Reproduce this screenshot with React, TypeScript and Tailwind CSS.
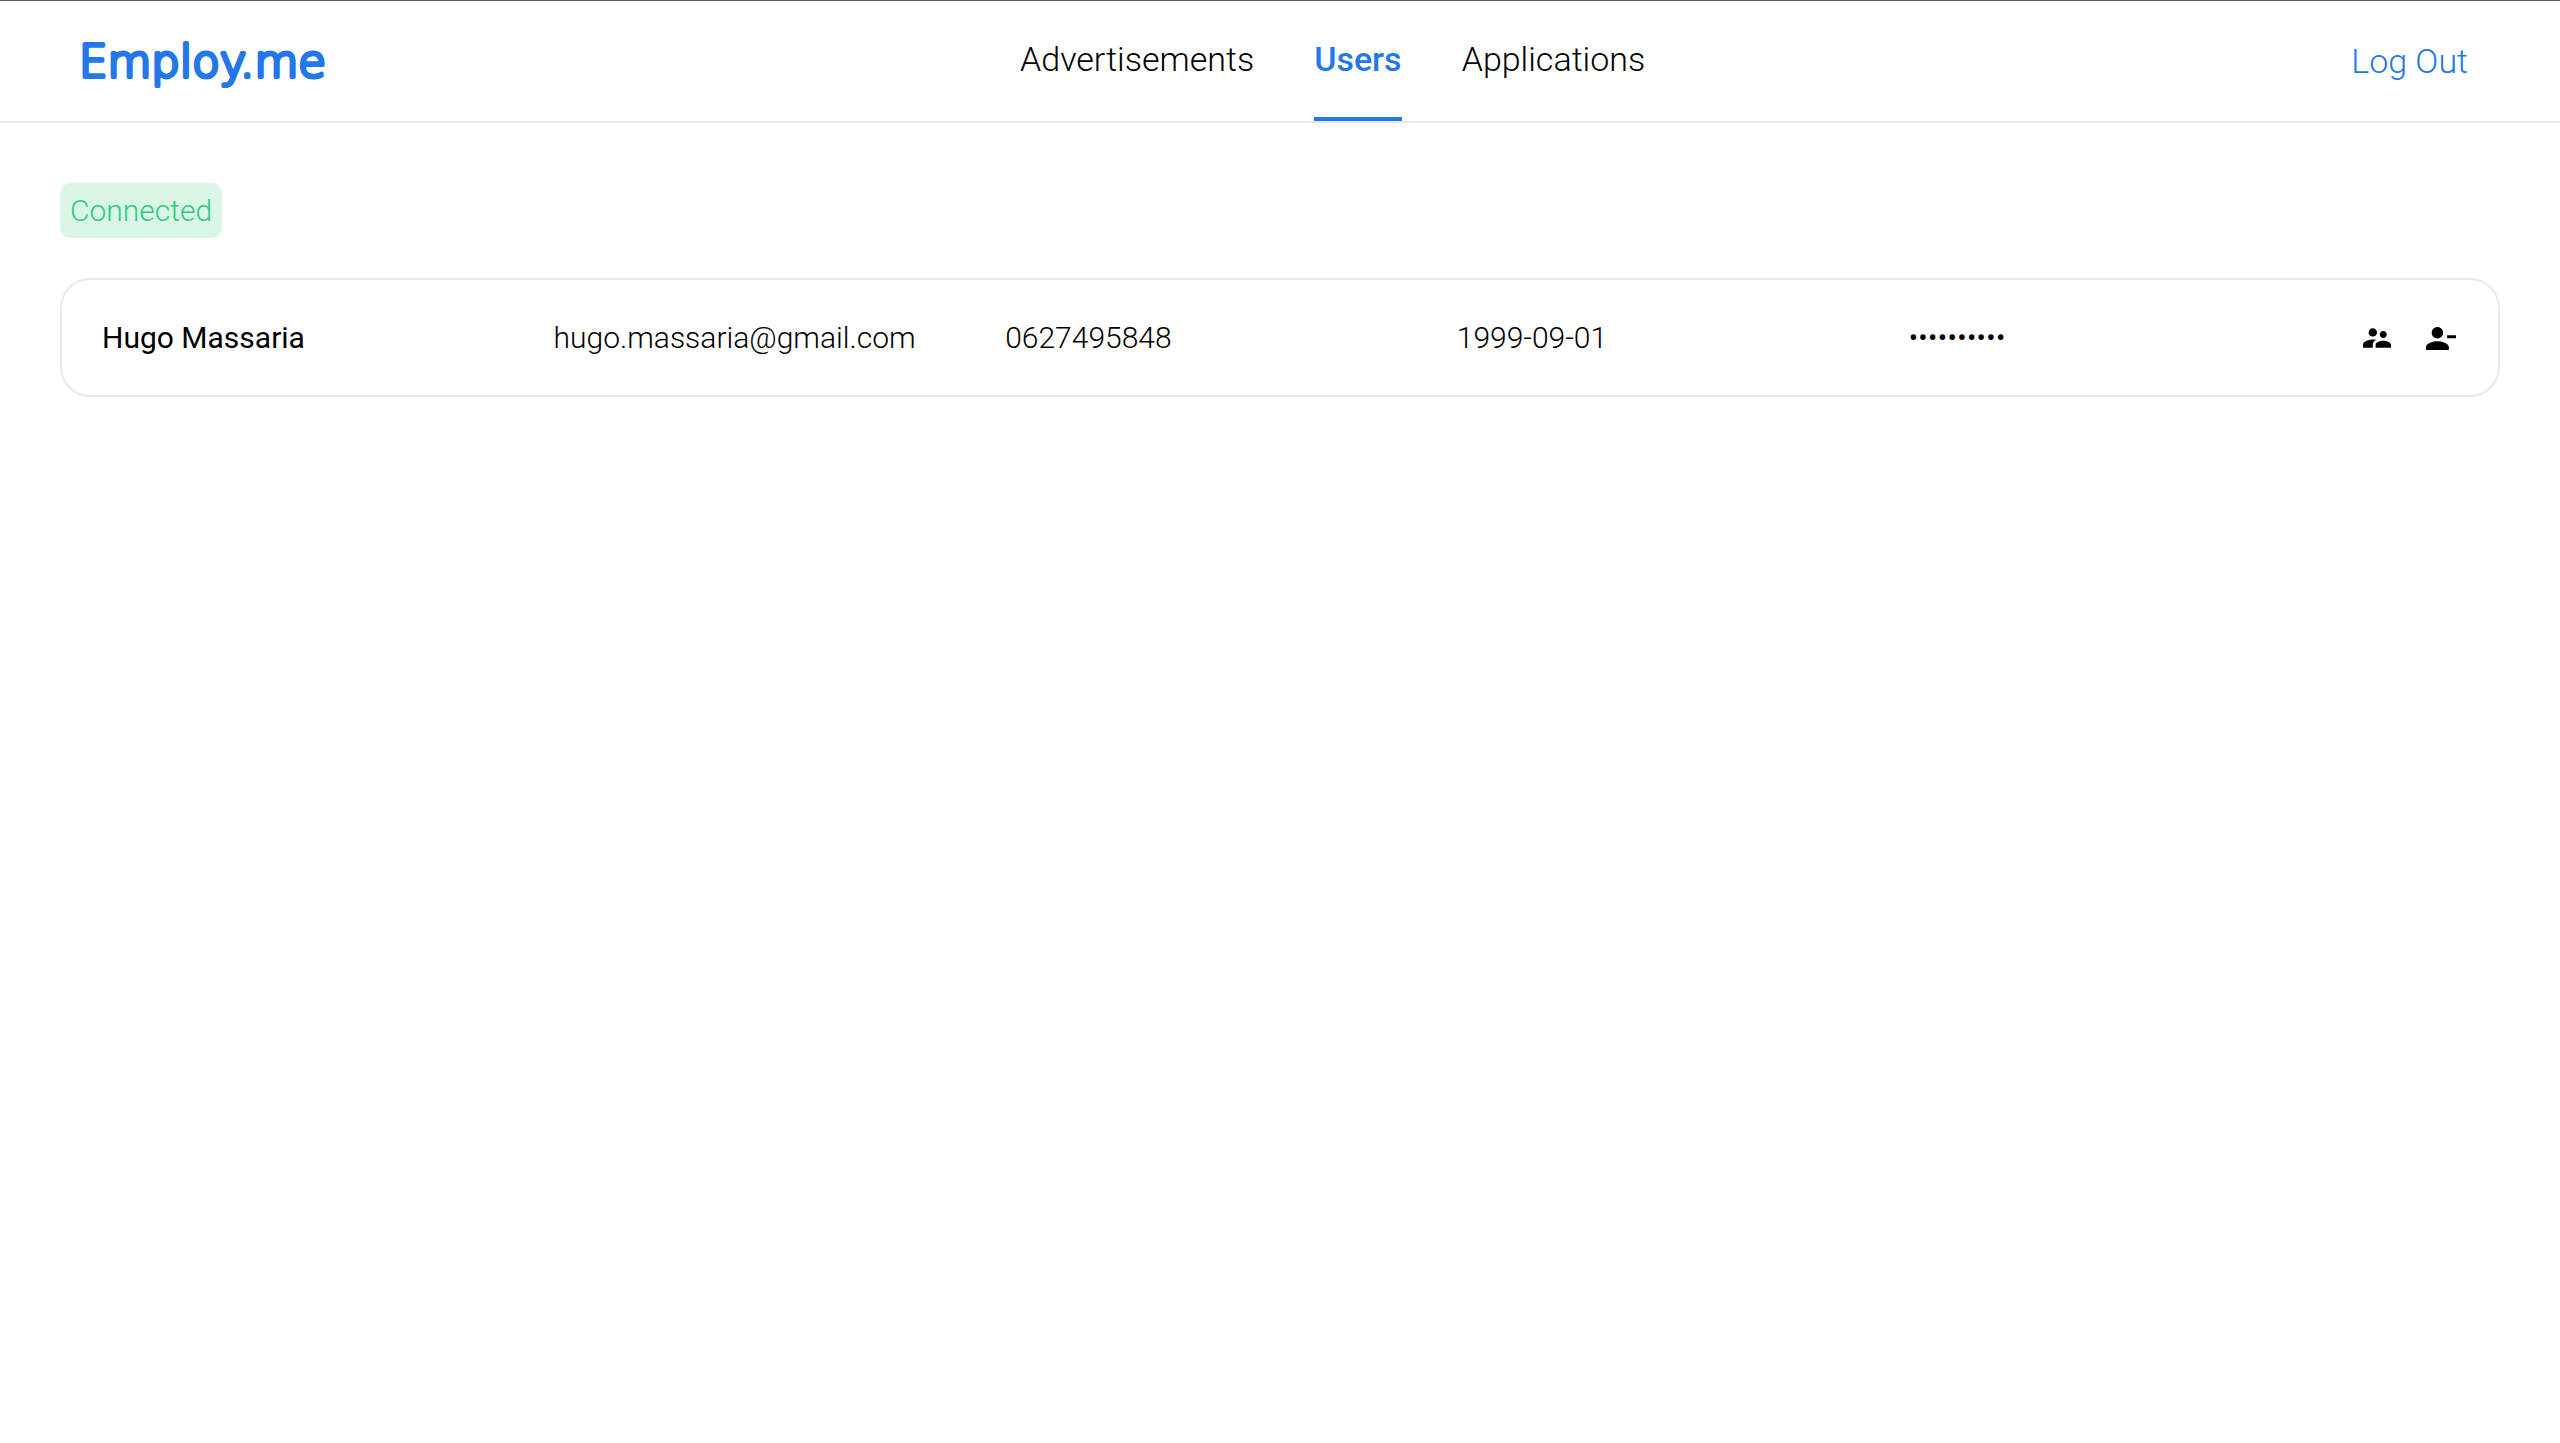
const navItems = [
  { label: "Advertisements", active: false },
  { label: "Users", active: true },
  { label: "Applications", active: false },
];

const users = [
  {
    name: "Hugo Massaria",
    email: "hugo.massaria@gmail.com",
    phone: "0627495848",
    birthDate: "1999-09-01",
    password: "••••••••••",
  },
];

function Logo() {
  return (
    <a href="#" aria-label="Employ.me" className="block">
      <svg width="234" height="64" viewBox="0 0 234 64" className="block overflow-visible" aria-hidden="true">
        <text
          x="-1"
          y="48"
          fill="#2377e8"
          stroke="#2377e8"
          strokeWidth="4"
          strokeLinejoin="round"
          className="font-['DejaVu_Sans',sans-serif] text-[45px] font-extralight"
        >
          Employ.me
        </text>
      </svg>
    </a>
  );
}

function Header() {
  return (
    <header className="flex h-[123px] items-stretch justify-between border-t border-b-2 border-t-[#5f5f66] border-b-[#e8e8e8] pr-[92px] pl-20">
      <div className="flex items-center">
        <Logo />
      </div>
      <nav className="flex gap-[60px]">
        {navItems.map((item) => (
          <a
            key={item.label}
            href="#"
            aria-current={item.active ? "page" : undefined}
            className={
              item.active
                ? "flex items-center border-b-4 border-[#2377e8] font-medium text-[#2377e8]"
                : "flex items-center border-b-4 border-transparent text-black"
            }
          >
            {item.label}
          </a>
        ))}
      </nav>
      <button type="button" className="text-[#2377e8]">
        Log Out
      </button>
    </header>
  );
}

function SupervisorIcon() {
  return (
    <svg viewBox="2 5 20 14" className="h-5 w-7" fill="currentColor" aria-hidden="true">
      <path d="M16.5 12c1.38 0 2.49-1.12 2.49-2.5S17.88 7 16.5 7 14 8.12 14 9.5s1.12 2.5 2.5 2.5zM9 11c1.66 0 2.99-1.34 2.99-3S10.66 5 9 5 6 6.34 6 8s1.34 3 3 3zm7.5 3c-1.83 0-5.5.92-5.5 2.75V19h11v-2.25c0-1.83-3.67-2.75-5.5-2.75zM9 13c-2.33 0-7 1.17-7 3.5V19h7v-2.25c0-.85.33-2.34 2.37-3.47C10.5 13.1 9.66 13 9 13z" />
    </svg>
  );
}

function RemoveUserIcon() {
  return (
    <svg viewBox="4 4 21 16" className="h-[23px] w-[30px]" fill="currentColor" aria-hidden="true">
      <path d="M12 12c2.21 0 4-1.79 4-4s-1.79-4-4-4-4 1.79-4 4 1.79 4 4 4zm0 2c-2.67 0-8 1.34-8 4v2h16v-2c0-2.66-5.33-4-8-4zM18.8 9.8H25v2h-6.2z" />
    </svg>
  );
}

export default function App() {
  return (
    <div className="min-h-screen bg-white font-['Roboto',sans-serif] text-[34px] leading-10 font-light text-black">
      <Header />
      <main className="p-[60px] text-[30px]">
        <span className="block w-fit rounded-[10px] bg-[#daf6e6] px-2.5 pt-2 pb-[7px] text-[#2fcc7a]">
          Connected
        </span>
        <ul className="mt-10 flex flex-col gap-5">
          {users.map((user) => (
            <li
              key={user.email}
              className="grid grid-cols-[repeat(5,minmax(0,1fr))_auto] items-center rounded-[30px] border-2 border-[#e8e8e8] px-10 pt-[38px] pb-[37px]"
            >
              <span className="font-normal">{user.name}</span>
              <span>{user.email}</span>
              <span>{user.phone}</span>
              <span>{user.birthDate}</span>
              <span>{user.password}</span>
              <span className="flex gap-[30px]">
                <button type="button" aria-label="Manage user" className="flex size-[34px] items-center justify-center">
                  <SupervisorIcon />
                </button>
                <button type="button" aria-label="Remove user" className="flex size-[34px] items-center justify-center">
                  <RemoveUserIcon />
                </button>
              </span>
            </li>
          ))}
        </ul>
      </main>
    </div>
  );
}
